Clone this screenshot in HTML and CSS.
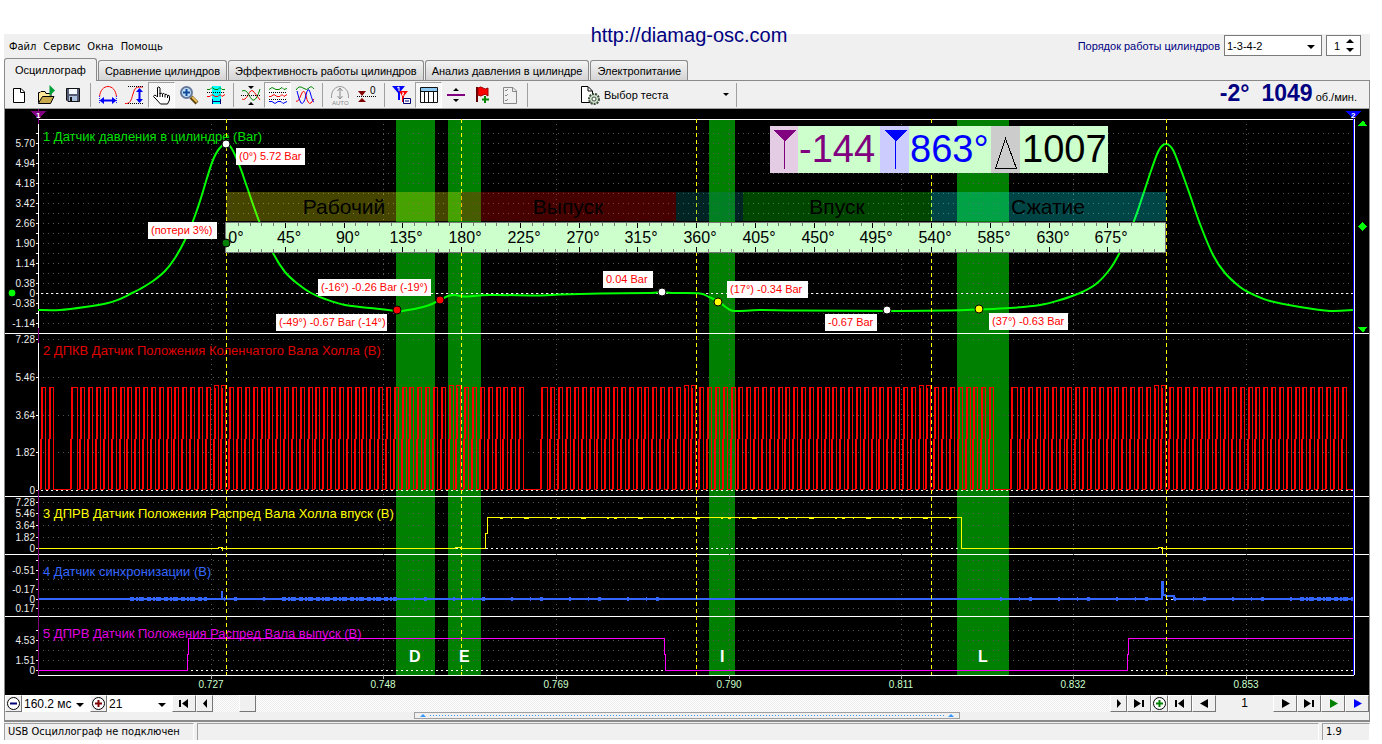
FILE: index.html
```html
<!DOCTYPE html>
<html lang="ru">
<head>
<meta charset="utf-8">
<title>USB Осциллограф</title>
<link rel="stylesheet" href="styles.css">
</head>
<body>
<main class="app">
  <a class="site-link" href="http://diamag-osc.com">http://diamag-osc.com</a>
  <header class="topbar">
    <nav class="menu">
      <button>Файл</button><button>Сервис</button><button>Окна</button><button>Помощь</button>
    </nav>
    <div class="order">
      <label for="order">Порядок работы цилиндров</label>
      <span class="pick pick-order"><select id="order"><option>1-3-4-2</option></select></span>
      <span class="spin">
        <input type="text" value="1" aria-label="Цилиндр">
        <span class="spin-buttons">
          <button aria-label="Больше"><svg width="8" height="5"><path d="M4 0L8 4H0z"/></svg></button>
          <button aria-label="Меньше"><svg width="8" height="5"><path d="M0 1H8L4 5z"/></svg></button>
        </span>
      </span>
    </div>
  </header>
  <nav class="tabs">
    <button class="tab active">Осциллограф</button>
    <button class="tab">Сравнение цилиндров</button>
    <button class="tab">Эффективность работы цилиндров</button>
    <button class="tab">Анализ давления в цилиндре</button>
    <button class="tab">Электропитание</button>
  </nav>
  <section class="panel">
    <div class="toolbar">
      <button class="tool" aria-label="Новый"><svg width="20" height="20"><path d="M4.500 3.500H12L15.500 7V17.500H4.500z" fill="#fff" stroke="#000"/><path d="M11.500 3.500V7.500H15.500" fill="none" stroke="#000"/></svg></button>
      <button class="tool" aria-label="Открыть"><svg width="20" height="20"><path d="M2.500 17.500V7.500H4L5 6.500H9L10 8.500H15V11" fill="#ffe89a" stroke="#000"/><path d="M2.500 18L6.500 11.500H18L14.500 18.500H2.500z" fill="#c9a94e" stroke="#000"/><path d="M13.500 0L19 5.500L13.500 11z" fill="#00a038"/></svg></button>
      <button class="tool" aria-label="Сохранить"><svg width="20" height="20"><path d="M3.500 3.500H16.500V16.500H5L3.500 15z" fill="#555a75" stroke="#111"/><path d="M6 4H14V9H6z" fill="#f4f8ff"/><path d="M6 11H14V16H6z" fill="#aac0dd"/><path d="M7 12H9V16H7z" fill="#111"/></svg></button>
      <span class="sep"></span>
      <button class="tool" aria-label="Период"><svg width="20" height="20" fill="none"><path d="M1.500 12C2 5 6 1.500 10 1.500S18 5 18.500 12" stroke="#f00"/><path d="M1.500 11V19M18.500 11V19" stroke="#22f" stroke-dasharray="1 1"/><path d="M4 15.500H16" stroke="#00f" stroke-width="2"/><path d="M6 12V19L1.500 15.500zM14 12V19L18.500 15.500z" fill="#00f"/></svg></button>
      <button class="tool" aria-label="Амплитуда"><svg width="20" height="20" fill="none"><path d="M0 18.500C5 19 6 16 8 9S11 2 18 2" stroke="#f00"/><path d="M3 1.500H18M3 18.500H18" stroke="#000" stroke-dasharray="1 1"/><path d="M14.500 5V16" stroke="#00f" stroke-width="2"/><path d="M11 7H18L14.500 3zM11 14H18L14.500 18z" fill="#00f"/></svg></button>
      <button class="tool pressed" aria-label="Перемещение"><svg width="20" height="20"><path d="M5.500 2.500Q7 1 8 3V9Q9 7 10.500 9Q12 7.500 13 9.500Q14.500 8.500 15.500 10.500Q17.500 9.500 17.500 12V15L15.500 19H8.500L4 14L1.500 11.500Q2 9.500 4 10.500L5.500 12z" fill="#fff" stroke="#000"/><path d="M8 8V12M10.500 9V12M13 9.500V12.500M15.500 10.500V13" stroke="#000" fill="none"/></svg></button>
      <button class="tool" aria-label="Масштаб"><svg width="20" height="20"><path d="M12 12L18 18" stroke="#5a430e" stroke-width="4"/><path d="M13 12L18 17" stroke="#edbd55" stroke-width="2"/><circle cx="7.500" cy="7.500" r="5.500" fill="#bfe0fa" stroke="#66789a" stroke-width="2"/><path d="M4 7.500H11M7.500 4V11" stroke="#124a9a" stroke-width="2"/></svg></button>
      <button class="tool" aria-label="Область"><svg width="20" height="20" fill="none"><path d="M6 1H15V19H6z" fill="#0ff"/><path d="M1 4.500H4L6 2.500L9 4.500H12L14 2.500L16 4.500H19" stroke="#080"/><path d="M1 11.500H4L6 9.500L9 11.500H12L14 9.500L16 11.500L19 9.500" stroke="#f00"/><path d="M1 7.500H19" stroke="#000" stroke-dasharray="1 1"/><path d="M6.500 14V19M14.500 14V19M7 16.500H14" stroke="#007"/></svg></button>
      <span class="sep"></span>
      <button class="tool" aria-label="Совместить"><svg width="20" height="20" fill="none"><path d="M1 14Q4 16 7 10T12 6T19 15" stroke="#f00"/><path d="M1 6Q5 4 8 10T13 15Q16 14 19 4" stroke="#080"/><path d="M0 10.500H20" stroke="#000" stroke-dasharray="1 1"/><path d="M7 1H13L10 4zM7 20H13L10 17z" fill="#000"/></svg></button>
      <button class="tool pressed" aria-label="Разнести"><svg width="20" height="20" fill="none"><path d="M1 4.500L4 2.500L8 4.500H11L14 2.500L16 4.500L19 3.500" stroke="#080"/><path d="M1 11.500H3L6 9.500L9 11.500H12L14 9.500L16 11.500L19 9.500" stroke="#f00"/><path d="M1 16.500H4L7 18.500L10 16.500H13L15 18.500L19 16.500" stroke="#00f"/><path d="M1 7.500H19M1 14.500H19" stroke="#000" stroke-dasharray="1 1"/></svg></button>
      <button class="tool" aria-label="Наложить"><svg width="20" height="20" fill="none"><path d="M1 5Q4 0 8 3T14 3T19 4" stroke="#080"/><path d="M1 16Q3 18 6 10T11 11T16 18L19 14" stroke="#f00"/><path d="M2 6Q4 15 6 18Q9 20 11 10Q13 1 15 7Q18 18 19 17" stroke="#00f"/></svg></button>
      <span class="sep"></span>
      <button class="tool" aria-label="Авто"><svg width="20" height="20" fill="none"><path d="M1.500 13C1 5 6 1.500 10 1.500S19 5 18.500 13" stroke="#999"/><path d="M10 4V13M7.500 6L10 3L12.500 6M7.500 11L10 14L12.500 11" stroke="#888"/><text x="2" y="20" class="icon-auto">AUTO</text></svg></button>
      <button class="tool" aria-label="Обнулить"><svg width="20" height="20"><path d="M1 6H9L5 11zM1 17H9L5 13z" fill="#800000"/><path d="M0 11.500H20" stroke="#000" stroke-dasharray="1 1"/><text x="13" y="9" class="icon-zero">0</text></svg></button>
      <span class="sep"></span>
      <button class="tool" aria-label="Маркеры"><svg width="20" height="20"><path d="M0 1H13L8 7V15H6V8z" fill="#00f"/><path d="M7 6H16L12 11V17H10V11z" fill="#f00"/><path d="M5 3L7 2V6M10 8H12L10 10H12" stroke="#fff" fill="none"/><path d="M11.500 13.500H18.500V18.500H11.500z" fill="#fff" stroke="#007"/><path d="M13 16H17" stroke="#007"/></svg></button>
      <button class="tool pressed" aria-label="Таблица"><svg width="20" height="20"><path d="M1.500 2.500H18.500V17.500H1.500z" fill="#fff" stroke="#111"/><path d="M2 3H18V6H2z" fill="#8cc8f4"/><path d="M1 6.500H19M5.500 6V17M9.500 6V17M14.500 6V17" stroke="#111"/></svg></button>
      <button class="tool" aria-label="Разделитель"><svg width="20" height="20"><path d="M1 9H19V11H1z" fill="#800080"/><path d="M7 6H13L10 3zM7 14H13L10 17z"/></svg></button>
      <button class="tool" aria-label="Добавить метку"><svg width="20" height="20"><path d="M4 2V17" stroke="#600" stroke-width="2"/><path d="M5 3Q8 1 10 3T15 3V11Q12 8 10 10T5 10z" fill="#f00" stroke="#900"/><path d="M12 11V18M9 14.500H16" stroke="#080" stroke-width="2"/></svg></button>
      <button class="tool" aria-label="Отчёт"><svg width="20" height="20" fill="none"><path d="M3.500 2.500H13L16.500 6V18.500H3.500z" stroke="#888"/><path d="M12.500 3V6.500H16M5 5L6 6L8 4M5 10L6 11L8 9M5 15L6 16L8 14" stroke="#888"/></svg></button>
      <span class="sep"></span>
      <button class="test"><svg width="21" height="20"><path d="M2.500 1.500H9L13.500 6V17.500H2.500z" fill="#fff" stroke="#000"/><path d="M9 2V6H13" fill="none" stroke="#000"/><circle cx="15" cy="14" r="5" fill="#cde0c9" stroke="#3f4e3e" stroke-width="2" stroke-dasharray="2 1"/><circle cx="15" cy="14" r="2" fill="#fff" stroke="#3f4e3e"/></svg><span>Выбор теста</span><svg class="test-arrow" width="7" height="4"><path d="M0 0H6L3 3z"/></svg></button>
      <span class="sep"></span>
      <output class="speed"><b>-2°</b><b>1049</b><span>об./мин.</span></output>
    </div>
    <svg class="scope" id="scope" viewBox="5 109 1364 586" role="img" aria-label="Осциллограмма">
      <g id="zones"></g>
      <g id="grid"></g>
      <g id="titles"></g>
      <g id="waves"></g>
      <g id="phases"></g>
      <g id="readout">
        <path d="M798 126h310v47h-310z" fill="#cfc"/>
        <path d="M770 126h28v47h-28z" fill="#e5cce5"/><path d="M880 126h29v47h-29z" fill="#ccf"/><path d="M991 126h29v47h-29z" fill="#ccc"/>
        <path d="M773 130h23l-11 12z" fill="#800080"/><path d="M784.500 140v29" stroke="#800080"/>
        <path d="M884 130h23l-11 12z" fill="#00f"/><path d="M895.500 140v29" stroke="#00f"/>
        <path d="M995.500 168.500h21l-11-30z" fill="none" stroke="#000"/>
        <text x="799" y="162" class="big" fill="#800080">-144</text>
        <text x="910" y="162" class="big" fill="#00f">863°</text>
        <text x="1022" y="162" class="big">1007</text>
      </g>
      <g id="marks"></g>
      <path d="M1353.500 119V675" stroke="#00f"/><path d="M1354.500 119V675" stroke="#fff"/>
      <path d="M38.500 109V124M38.500 328V343M38.500 490V675" stroke="#800080"/>
      <path d="M31 111h15l-8 8z" fill="#800080"/><path d="M1346 111h15l-8 8z" fill="#00f"/>
      <text x="36" y="118" class="tiny">1</text><text x="1351" y="118" class="tiny">2</text>
      <path d="M1358 126h9l-4-6zM1358 327h9l-4 6zM1358 226.500l4.500-4.500l4.500 4.500l-4.500 4.500z" fill="#0f0"/>
    </svg>
    <div class="transport">
      <button class="key key-s" aria-label="Уменьшить"><svg width="15" height="15"><circle cx="7.500" cy="7.500" r="6" fill="#fff" stroke="#000"/><path d="M4 7.500H11" stroke="#00007a" stroke-width="2"/></svg></button>
      <span class="pick pick-time"><select aria-label="Развёртка"><option>160.2 мс</option></select></span>
      <button class="key key-s" aria-label="Увеличить"><svg width="15" height="15"><circle cx="7.500" cy="7.500" r="6" fill="#fff" stroke="#000"/><path d="M4 7.500H11M7.500 4V11" stroke="#800000" stroke-width="2"/></svg></button>
      <span class="pick pick-zoom"><select aria-label="Масштаб"><option>21</option></select></span>
      <button class="key key-l" aria-label="В начало"><svg width="12" height="9"><path d="M1 1H3V8H1zM10 0V9L4 4.500z"/></svg></button>
      <button class="key key-s" aria-label="Назад"><svg width="6" height="9"><path d="M5 0V9L1 4.500z"/></svg></button>
      <input class="scroll" type="range" min="0" max="100" value="3" aria-label="Положение">
      <button class="key key-s" aria-label="Вперёд"><svg width="6" height="9"><path d="M1 0V9L5 4.500z"/></svg></button>
      <button class="key key-l" aria-label="В конец"><svg width="12" height="9"><path d="M1 0V9L8 4.500zM9 1H11V8H9z"/></svg></button>
      <button class="key key-s" aria-label="Добавить"><svg width="15" height="15"><circle cx="7.500" cy="7.500" r="6" fill="#fff" stroke="#000"/><path d="M4 7.500H11M7.500 4V11" stroke="#008000" stroke-width="2"/></svg></button>
      <button class="key key-l" aria-label="Первый кадр"><svg width="12" height="9"><path d="M1 1H3V8H1zM10 0V9L4 4.500z"/></svg></button>
      <button class="key key-l" aria-label="Предыдущий кадр"><svg width="9" height="9"><path d="M8 0V9L0 4.500z"/></svg></button>
      <output class="frame">1</output>
      <button class="key key-l" aria-label="Следующий кадр"><svg width="9" height="9"><path d="M1 0V9L9 4.500z"/></svg></button>
      <button class="key key-l" aria-label="Последний кадр"><svg width="12" height="9"><path d="M1 0V9L8 4.500zM9 1H11V8H9z"/></svg></button>
      <button class="key key-l" aria-label="Пуск"><svg width="9" height="9"><path d="M1 0V9L9 4.500z" fill="#008000"/></svg></button>
      <button class="key key-l" aria-label="Запись"><svg width="9" height="9"><path d="M1 0V9L9 4.500z" fill="#00f"/></svg></button>
    </div>
    <div class="splitter"><span class="grip"><svg width="6" height="4"><path d="M3 0L6 3H0z" fill="#39f"/></svg><i></i><svg width="6" height="4"><path d="M3 0L6 3H0z" fill="#39f"/></svg></span></div>
  </section>
  <footer class="status">
    <span class="status-text">USB Осциллограф не подключен</span><span class="status-fill"></span><span class="status-ver">1.9</span>
  </footer>
</main>
<script src="scope.js"></script>
</body>
</html>
```

FILE: styles.css
```css
* { box-sizing: border-box; }
body { margin: 0; padding: 34px 12px 0 4px; background: #fff; color: #000; font: 11px/16px "Liberation Sans", Arial, sans-serif; }
button, select, input { font: inherit; color: inherit; margin: 0; padding: 0; border: 0; background: none; border-radius: 0; }
svg { display: block; flex: none; }
.app { position: relative; background: #f0f0f0; }
.site-link { position: absolute; top: -11px; left: 50%; transform: translateX(-50%); font-size: 20px; line-height: 24px; color: #000080; text-decoration: none; white-space: nowrap; margin-left: 2px; }

.topbar { display: flex; justify-content: space-between; height: 24px; padding: 1px 9px 0 5px; }
.menu { display: flex; gap: 7px; padding-top: 4px; font-family: "DejaVu Sans Condensed", "DejaVu Sans", sans-serif; font-size: 11px; }
.menu button { height: 16px; }
.order { display: flex; align-items: center; gap: 4px; height: 21px; }
.order label { color: #000080; font-size: 11px; }
.pick { position: relative; display: block; background: #fff; }
.pick select { appearance: none; width: 100%; height: 100%; display: block; padding-left: 2px; }
.pick::after { content: ""; position: absolute; right: 6px; top: 50%; margin-top: -1px; border: 4px solid transparent; border-top-color: #000; border-bottom: 0; pointer-events: none; }
.pick-order { width: 98px; height: 21px; border: 1px solid #7a7a7a; }
.spin { display: flex; width: 35px; height: 21px; border: 1px solid #7a7a7a; background: #fff; }
.spin input { width: 19px; padding-left: 7px; }
.spin-buttons { display: flex; flex-direction: column; justify-content: center; gap: 3px; }
.spin-buttons button { display: block; height: 5px; }

.tabs { display: flex; align-items: flex-end; gap: 1px; height: 22px; }
.tab { height: 20px; padding: 0 6px; border: 1px solid #8a8a8a; border-bottom: 0; border-radius: 3px 3px 0 0; background: linear-gradient(#f4f4f4, #d4d4d4); white-space: nowrap; }
.tab.active { height: 23px; margin: 0 0 -1px; padding: 0 10px; background: #f0f0f0; position: relative; }

.panel { border: 1px solid #8a8a8a; border-bottom-width: 2px; }
.toolbar { display: flex; align-items: center; height: 28px; border-bottom: 1px solid #a0a0a0; }
.tool { display: flex; align-items: center; justify-content: center; flex: none; width: 27px; height: 26px; }
.pressed { border: 1px solid #a0a0a0; border-right-color: #fff; border-bottom-color: #fff; background: repeating-conic-gradient(#fff 0 25%, #f0f0f0 0 50%) 0 0 / 2px 2px; }
.sep { flex: none; width: 1px; height: 24px; margin: 0 3px 0 4px; background: #a0a0a0; }
.icon-auto { font: 6px "Liberation Sans", sans-serif; fill: #888; }
.icon-zero { font: 10px "Liberation Sans", sans-serif; }
.test { display: flex; align-items: center; gap: 4px; width: 153px; margin-left: 48px; padding-right: 2px; height: 26px; text-align: left; }
.test-arrow { margin: 0 0 0 auto; }
.speed { display: flex; align-items: baseline; gap: 12px; margin-left: auto; padding-right: 12px; color: #000080; font-size: 23px; line-height: 26px; }
.speed span { margin-left: -9px; font-size: 11px; color: #000; }

.scope { width: 100%; height: auto; background: #000; }
.scope path { shape-rendering: crispEdges; }
.scope .smooth { shape-rendering: auto; }
.scope text { font-family: "Liberation Sans", Arial, sans-serif; }
.scope .title { font-size: 13px; }
.scope .scale { font-size: 10px; fill: #eee; text-anchor: end; }
.scope .time { font-size: 10px; fill: #cfc; text-anchor: middle; }
.scope .phase { font-size: 21px; fill: #000; text-anchor: middle; }
.scope .deg { font-size: 16px; text-anchor: middle; }
.scope .note { font-size: 11px; fill: #f00; }
.scope .big { font-size: 38px; }
.scope .letter { font-size: 16px; font-weight: bold; fill: #fff; }
.scope .tiny { font-size: 8px; font-weight: bold; fill: #fff; }

.transport { display: flex; height: 17px; font-size: 12px; }
.key { display: flex; align-items: center; justify-content: center; flex: none; height: 17px; background: #f0f0f0; border: 1px solid #fff; border-right-color: #777; border-bottom-color: #777; }
.key-s { width: 17px; }
.key-l { width: 24px; }
.pick-time { width: 68px; }
.pick-zoom { width: 65px; }
.scroll { appearance: none; flex: 1; min-width: 60px; height: 17px; background: repeating-conic-gradient(#fff 0 25%, #ececec 0 50%) 0 0 / 2px 2px; }
.scroll::-webkit-slider-thumb { appearance: none; width: 17px; height: 17px; background: #f0f0f0; border: 1px solid #fff; border-right-color: #777; border-bottom-color: #777; }
.frame { width: 57px; text-align: center; line-height: 17px; background: #f0f0f0; }
.splitter { display: flex; justify-content: center; height: 8px; }
.grip { display: flex; align-items: center; justify-content: space-between; gap: 4px; width: 40%; height: 7px; padding: 0 5px; border: 1px solid #a0a0a0; }
.grip i { flex: 1; height: 1px; background: repeating-linear-gradient(90deg, #39f 0 1px, transparent 1px 3px); }

.status { display: flex; gap: 3px; height: 17px; margin-top: 1px; font-family: "DejaVu Sans Condensed", "DejaVu Sans", sans-serif; }
.status span { border: 1px solid #a0a0a0; border-right-color: #fff; border-bottom: 0; padding-left: 3px; }
.status-text { width: 190px; white-space: nowrap; }
.status-fill { flex: 1; }
.status-ver { width: 48px; }
```

FILE: scope.js
```js
const NS = "http://www.w3.org/2000/svg";
const el = (parent, tag, attrs, text) => {
  const node = document.createElementNS(NS, tag);
  for (const key in attrs) node.setAttribute(key, attrs[key]);
  if (text !== undefined) node.textContent = text;
  document.getElementById(parent).append(node);
};
const line = (g, d, stroke, extra) => el(g, "path", { d, stroke, fill: "none", ...extra });
const LEFT = 38, RIGHT = 1354, TOP = 119, BOTTOM = 675;

// Valve event zones
[[396, 435, "D", 409], [448, 481, "E", 459], [709, 735, "I", 720], [957, 1009, "L", 978]].forEach(([a, b, name, x]) => {
  el("zones", "rect", { x: a, y: TOP, width: b - a, height: BOTTOM - TOP, fill: "#008000" });
  el("marks", "text", { x, y: 662, class: "letter" }, name);
});

// Channels: title, colour, title baseline, grid rows, scale labels, zero line, bottom edge
const channels = [
  ["1 Датчик давления в цилиндре (Bar)", "#00e000", 141, Array.from({ length: 20 }, (_, i) => 133 + i * 10),
    { 143: "5.70", 163: "4.94", 183: "4.18", 203: "3.42", 223: "2.66", 243: "1.90", 263: "1.14", 283: "0.38", 303: "-0.38", 323: "-1.14" }, 293, 333],
  ["2 ДПКВ Датчик Положения Коленчатого Вала Холла (В)", "#e00000", 355, [339, 377, 415, 452],
    { 339: "7.28", 377: "5.46", 415: "3.64", 452: "1.82" }, 490, 496],
  ["3 ДПРВ Датчик Положения Распред Вала Холла впуск (В)", "#ffff00", 518, [502, 513, 525, 537],
    { 502: "7.28", 513: "5.46", 525: "3.64", 537: "1.82" }, 548, 554],
  ["4 Датчик синхронизации (В)", "#3366ff", 576, [560, 570, 579, 589, 608],
    { 570: "-0.51", 589: "-0.17", 608: "0.17" }, 599, 616],
  ["5 ДПРВ Датчик Положения Распред Вала выпуск (В)", "#e000e0", 638, [630, 640, 650, 660],
    { 640: "4.53", 660: "1.51" }, 670, BOTTOM]
];
channels.forEach(([title, color, base, rows, labels, zero, end]) => {
  rows.forEach(y => {
    line("grid", `M43 ${y + .5}H${RIGHT}`, "#555", { "stroke-dasharray": "1 4" });
    line("grid", `M36 ${y + .5}H${LEFT}`, "#fff");
  });
  line("grid", `M36 ${zero + .5}H${RIGHT}`, "#fff", { "stroke-dasharray": "2 3" });
  line("grid", `M${end === BOTTOM ? LEFT : 5} ${end + .5}H${end === BOTTOM ? RIGHT : 1369}`, "#fff");
  for (const y in labels) el("grid", "text", { x: 35, y: +y + 4, class: "scale" }, labels[y]);
  el("grid", "text", { x: 35, y: zero + 4, class: "scale" }, "0");
  el("titles", "text", { x: 43, y: base, class: "title", fill: color }, title);
});
[211, 383, 556, 729, 901, 1073, 1246].forEach((x, i) => {
  line("grid", `M${x + .5} 124V${BOTTOM}`, "#555", { "stroke-dasharray": "1 4" });
  line("grid", `M${x + .5} ${BOTTOM}v4`, "#aaa");
  el("grid", "text", { x, y: 688, class: "time" }, (0.727 + i * 0.021).toFixed(3));
});
line("grid", `M${LEFT} ${TOP + .5}H${RIGHT}`, "#fff");
line("grid", `M${LEFT + .5} ${TOP}V${BOTTOM}`, "#fff");

// Crankshaft sensor: 60-2 wheel, 470 px per revolution
let teeth = `M41 489.5`, rises = "";
for (let n = -1; ; n++) {
  const slot = (n + 60) % 60;
  if (slot === 1 || slot === 2) continue;
  const fall = Math.round(53 + n * 470 / 60);
  if (fall > 1352) break;
  const rise = fall - (slot === 3 ? 6 : 4);
  const top = (fall + 20) % 235 < 12 ? 385.5 : 387.5;
  teeth += `H${rise - .5}V439.5H${rise + .5}V${top}H${fall + .5}V489.5`;
  rises += `M${rise} 489V439M${rise + 1} 439V388`;
}
line("waves", teeth + "H1353", "#f00");
line("waves", rises, "#f00", { "stroke-width": 2 });

// Camshaft sensors
line("waves", "M38 548.5H218v-1h4v3v-2H455v-1h5v1H485.500V533H487V517.500H961.500V548.500H1158v-1h4v6v-5H1353", "#ff0");
line("waves", "M500 518.500H955", "#ff0", { "stroke-dasharray": "3 8 1 12 5 21 2 5" });
line("waves", "M38 670.500H187.500V654H188.500V638.500H664.500V654H665.500V670.500H1127.500V654H1128.500V638.500H1353", "#f0f");

// Synchronisation sensor with noise bursts
line("waves", "M38 599H222V591V599H1162V582H1163V594L1166 596H1174V599H1353", "#36f", { "stroke-width": 2 });
[[130, 205], [282, 395], [1300, 1353]].forEach(([a, b]) =>
  line("waves", `M${a} 599H${b}`, "#36f", { "stroke-width": 4, "stroke-dasharray": "4 2 2 1 5 3" }));
line("waves", "M205 599H282M395 599H680M1000 599H1300", "#36f", { "stroke-width": 4, "stroke-dasharray": "2 17 1 9 3 26" });

// Cylinder pressure
const p = [[38,310],[60,310],[85,307],[108,303],[120,299],[132,293],[140,289],[153,281],[165,271],[175,258],[185,240],[193,221],[200,201],[207,178],[213,160],[219,149],[226,144],[232,149],[240,167],[247,187],[259,221],[273,253],[285,272],[298,284],[311,293],[325,299],[345,305],[370,308],[397,311],[405,310.500],[423,307],[432,304],[440,300],[448,296],[455,295],[465,296.500],[490,295],[540,295.500],[560,294.500],[600,293.500],[650,293],[661,292],[675,293],[700,293.500],[709,297],[718,301],[727,308],[735,311],[760,310],[800,310.500],[900,311],[950,310.500],[978,309.500],[1010,308],[1040,305],[1060,300],[1080,293],[1096,284],[1110,269],[1120,252],[1134,221],[1143,195],[1152,168],[1159,150],[1166,144],[1173,150],[1181,170],[1190,195],[1200,224],[1213,255],[1225,273],[1240,287],[1250,293],[1270,301],[1300,307],[1330,311],[1353,310]];
let curve = `M${p[0]}`;
for (let i = 0; i < p.length - 1; i++) {
  const a = p[i - 1] || p[i], b = p[i], c = p[i + 1], d = p[i + 2] || c;
  curve += `C${b[0] + (c[0] - a[0]) / 6} ${b[1] + (c[1] - a[1]) / 6} ${c[0] - (d[0] - b[0]) / 6} ${c[1] - (d[1] - b[1]) / 6} ${c}`;
}
line("waves", curve, "#0f0", { "stroke-width": 2, class: "smooth" });

// Dead centres every 180 degrees
for (let x = 226; x <= 1166; x += 235) line("waves", `M${x + .5} ${TOP}V${BOTTOM}`, "#ff0", { "stroke-dasharray": "4 3" });

// Strokes of the cycle and the degree ruler
[[226, 461, "#ff0"], [461, 676, "#f00"], [676, 743, "#008080"], [743, 931, "#0f0"], [931, 1166, "#0ff"]].forEach(([a, b, fill]) =>
  el("phases", "rect", { x: a, y: 192, width: b - a, height: 29, fill, "fill-opacity": .27 }));
[["Рабочий", 344], ["Выпуск", 568], ["Впуск", 837], ["Сжатие", 1048]].forEach(([name, x]) =>
  el("phases", "text", { x, y: 214, class: "phase" }, name));
el("phases", "rect", { x: 225.5, y: 222.5, width: 940, height: 30, fill: "#cfc", stroke: "#777" });
for (let i = 1; i < 80; i++) {
  const x = Math.round(226 + i * 11.75) + .5, major = i % 5 === 0, len = major ? 5 : 3;
  line("phases", `M${x} 223v${len}M${x} 252v${-len}`, major ? "#000" : "#777");
}
for (let i = 0; i < 16; i++)
  el("phases", "text", { x: Math.round(226 + i * 58.75) + (i ? 4 : 10), y: 243, class: "deg" }, i * 45 + "°");

// Measured values
[[236, 148, 69, "(0°) 5.72 Bar"], [148, 222, 69, "(потери 3%)"], [318, 279, 113, "(-16°) -0.26 Bar (-19°)"],
 [276, 314, 111, "(-49°) -0.67 Bar (-14°)"], [603, 271, 50, "0.04 Bar"], [727, 281, 81, "(17°) -0.34 Bar"],
 [825, 314, 52, "-0.67 Bar"], [989, 313, 79, "(37°) -0.63 Bar"]].forEach(([x, y, width, text]) => {
  el("marks", "rect", { x, y, width, height: 17, fill: "#fff" });
  el("marks", "text", { x: x + 3, y: y + 12, class: "note" }, text);
});
[[226, 144, "#fff"], [226, 243, "#008000"], [397, 310, "#f00"], [440, 300, "#f00"], [662, 292, "#fff"],
 [718, 302, "#ff0"], [887, 310, "#fff"], [979, 309, "#ff0"], [12, 293, "#0f0"]].forEach(([cx, cy, fill]) =>
  el("marks", "circle", { cx, cy, r: 4, fill, stroke: "#000" }));
```
